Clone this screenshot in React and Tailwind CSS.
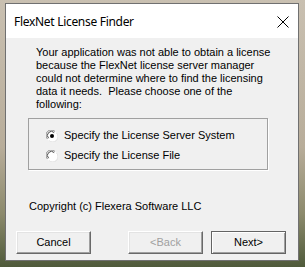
import React from 'react';

const Radio = ({ checked }) => (
  <svg width="12" height="12" viewBox="0 0 12 12" className="shrink-0">
    <circle cx="6" cy="6" r="5.5" fill="#ffffff" />
    <path d="M1.5 9 A5 5 0 0 1 9 1.5" stroke="#8a8a8a" strokeWidth="1" fill="none" />
    <path d="M2.6 8.2 A3.8 3.8 0 0 1 8.2 2.6" stroke="#4a4a4a" strokeWidth="1" fill="none" />
    <path d="M10.5 3 A5 5 0 0 1 3 10.5" stroke="#e3e3e3" strokeWidth="1" fill="none" />
    {checked && <circle cx="6" cy="6" r="2" fill="#000000" />}
  </svg>
);

const Button = ({ children, disabled, primary, className = '' }) => (
  <button
    disabled={disabled}
    className={
      'w-[75px] h-[23px] bg-[#f0f0f0] flex items-center justify-center text-[11px] leading-none ' +
      (primary
        ? 'border border-[#646464] shadow-[inset_1px_1px_#ffffff,inset_-1px_-1px_#a0a0a0] '
        : 'border-t border-l border-t-[#ffffff] border-l-[#ffffff] border-b border-r border-b-[#696969] border-r-[#696969] shadow-[inset_-1px_-1px_#a0a0a0,inset_1px_1px_#e3e3e3] ') +
      (disabled ? 'text-[#a0a0a0] ' : 'text-black ') +
      className
    }
  >
    {children}
  </button>
);

export default function App() {
  return (
    <div
      className="w-[305px] h-[267px] pt-[3px] pl-[5px] overflow-hidden bg-[linear-gradient(180deg,#c9c0b1_0%,#b8ad9a_55%,#8c8a6c_80%,#4f5a3a_100%)]"
      style={{ fontFamily: '"Liberation Sans", Arial, sans-serif' }}
    >
      <div className="w-[294px] h-[258px] border border-[#707070] bg-[#f0f0f0] flex flex-col">
        {/* Title bar */}
        <div className="h-[34px] bg-white flex items-center justify-between pl-[8px] pr-[8px] pt-[2px] shrink-0">
          <span
            className="text-[12px] tracking-[-0.3px] text-black"
            style={{ fontFamily: '"Noto Sans", "Open Sans", sans-serif' }}
          >
            FlexNet License Finder
          </span>
          <svg width="12" height="12" viewBox="0 0 12 12" className="mr-[1px] mb-[1px]">
            <path d="M0.5 0.5 L11.5 11.5 M11.5 0.5 L0.5 11.5" stroke="#000" strokeWidth="1" />
          </svg>
        </div>

        {/* Body */}
        <div className="flex flex-col pt-[8px] text-[11px] leading-[13px] text-black">
          <p className="ml-[30px]">
            Your application was not able to obtain a license
            <br />
            because the FlexNet license server manager
            <br />
            could not determine where to find the licensing
            <br />
            data it needs.&nbsp; Please choose one of the
            <br />
            following:
          </p>

          <div className="ml-[22px] mt-[7px] w-[240px] h-[52px] border border-[#a0a0a0] shadow-[1px_1px_0_#ffffff] flex flex-col gap-[7px] pt-[10px] pl-[17px]">
            <div className="flex items-center gap-[6px] h-[13px]">
              <Radio checked />
              <span>Specify the License Server System</span>
            </div>
            <div className="flex items-center gap-[6px] h-[13px]">
              <Radio />
              <span>Specify the License File</span>
            </div>
          </div>

          <p className="ml-[23px] mt-[30px]">Copyright (c) Flexera Software LLC</p>

          <div className="flex mt-[18px] ml-[10px]">
            <Button>Cancel</Button>
            <Button disabled className="ml-[37px]">&lt;Back</Button>
            <Button primary className="ml-[8px]">Next&gt;</Button>
          </div>
        </div>
      </div>
    </div>
  );
}
